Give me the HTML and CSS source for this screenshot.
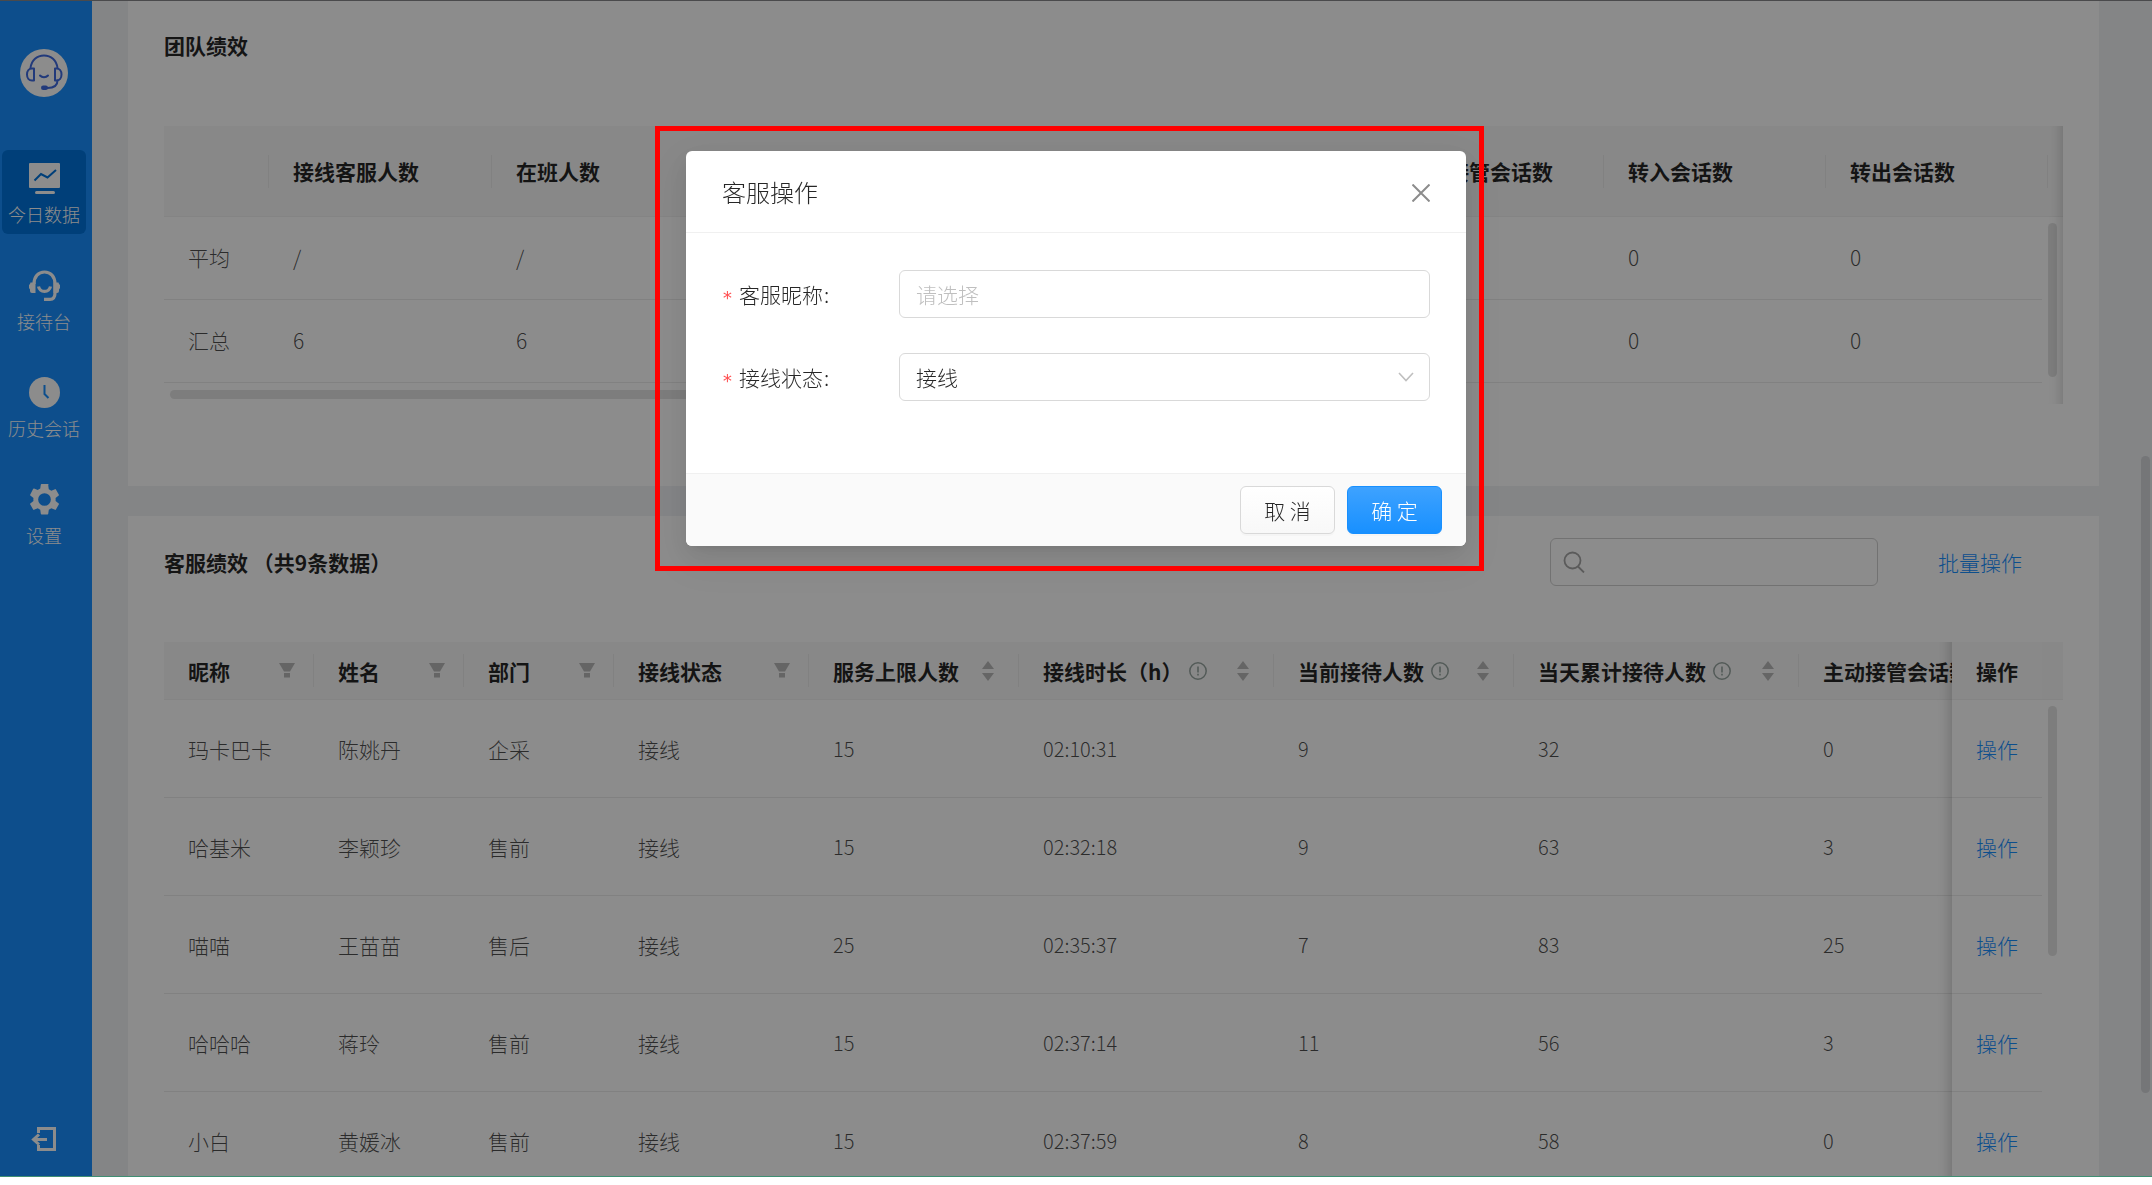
FILE: index.html
```html
<!DOCTYPE html>
<html lang="zh-CN">
<head>
<meta charset="utf-8">
<meta name="viewport" content="width=device-width, initial-scale=1">
<title>今日数据</title>
<link rel="stylesheet" href="styles.css">
</head>
<body>
<svg class="sprite" aria-hidden="true">
  <symbol id="i-filter" viewBox="0 0 16 15"><path d="M0 0h16l-5 8.500H5zM5 10h6v4.500H5z"/></symbol>
  <symbol id="i-sort" viewBox="0 0 12 20"><path d="M6 0l6 8H0zM6 20l6-8H0z"/></symbol>
  <symbol id="i-info" viewBox="0 0 18 18"><circle cx="9" cy="9" r="8.200" fill="none" stroke="currentColor" stroke-width="1.500"/><path d="M8.200 4.500h1.600v6H8.200zM8.200 11.800h1.600v1.700H8.200z"/></symbol>
</svg>
<div class="app">
  <nav class="sidebar">
    <svg class="avatar" viewBox="0 0 48 48" role="img" aria-label="客服">
      <circle cx="24" cy="24" r="24" fill="#fff"/>
      <g fill="none" stroke="#3f6ae0" stroke-width="2" stroke-linecap="round" stroke-linejoin="round">
        <path d="M10.500 19C11.500 11 17 6.500 24 6.500S36.500 11 37.500 19"/>
        <path d="M14 19.500v12h-2c-3 0-5-2.500-5-6s2-6 5-6zM35 19.500v12h1.500c3 0 5-2.500 5-6s-2-6-5-6z"/>
        <path d="M20 26.500c2 2.300 6 2.300 8 0"/>
        <path d="M37.500 31.500c0 4.500-3 7.500-10 7.500"/>
      </g>
      <rect x="21" y="36.500" width="7" height="4.500" rx="2.200" fill="#3f6ae0"/>
    </svg>
    <ul class="menu">
      <li><a class="menu-item active" href="#today">
        <svg viewBox="0 0 31 31"><path fill="currentColor" d="M1 0h29a1 1 0 0 1 1 1v23a1 1 0 0 1-1 1H1a1 1 0 0 1-1-1V1a1 1 0 0 1 1-1zM7.500 28h17a1.500 1.500 0 0 1 0 3h-17a1.500 1.500 0 0 1 0-3z"/><path d="M5.500 17.500l6.500-6.500 6.500 3.500L27 7" fill="none" stroke="#0073dc" stroke-width="2"/></svg>
        <span>今日数据</span></a></li>
      <li><a class="menu-item" href="#desk">
        <svg viewBox="0 0 31 31"><g fill="none" stroke="currentColor" stroke-width="3.200"><path d="M5 14C5 6.500 9.500 2 15.500 2S26 6.500 26 14v9c0 4-2 6.300-5 6.300h-6"/><path d="M9.500 16.500c1.500 6.500 10.500 6.500 12 0"/></g><path fill="currentColor" d="M1.500 12.500h5V23H3a2 2 0 0 1-2-2v-1.500L0 18v-3l1-1zM29.500 12.500h-5V23H28a2 2 0 0 0 2-2v-1.500l1-1.500v-3l-1-1z"/></svg>
        <span>接待台</span></a></li>
      <li><a class="menu-item" href="#history">
        <svg viewBox="0 0 31 31"><circle cx="15.500" cy="15.500" r="15.500" fill="currentColor"/><path d="M15.500 8v9l4 4" fill="none" stroke="#188fff" stroke-width="2"/></svg>
        <span>历史会话</span></a></li>
      <li><a class="menu-item" href="#settings">
        <svg viewBox="2 2 20 20"><path fill="currentColor" fill-rule="evenodd" d="M19.140 12.940c.04-.3.060-.61.060-.94s-.02-.64-.07-.94l2.030-1.580a.49.49 0 0 0 .12-.61l-1.920-3.320a.49.49 0 0 0-.59-.22l-2.390.96a7 7 0 0 0-1.620-.94l-.36-2.540A.48.48 0 0 0 13.920 2h-3.840a.48.48 0 0 0-.47.410l-.36 2.540a7.300 7.300 0 0 0-1.620.94l-2.390-.96a.48.48 0 0 0-.59.220L2.740 8.870a.48.48 0 0 0 .12.610l2.030 1.580a6 6 0 0 0 0 1.880l-2.030 1.580a.49.49 0 0 0-.12.610l1.920 3.320c.12.220.37.290.59.220l2.390-.96c.5.380 1.030.7 1.620.94l.36 2.540c.05.240.24.410.48.410h3.840c.24 0 .44-.17.470-.41l.36-2.540a7 7 0 0 0 1.620-.94l2.390.96c.22.080.47 0 .59-.22l1.920-3.320a.48.48 0 0 0-.12-.61zM12 16.100a4.100 4.100 0 1 1 0-8.200 4.100 4.100 0 0 1 0 8.200z"/></svg>
        <span>设置</span></a></li>
    </ul>
    <button class="logout" type="button" aria-label="退出">
      <svg viewBox="0 0 26 24" fill="none" stroke="currentColor" stroke-width="3"><path d="M7.500 6V1.500h16v21h-16V18M3 12.500h13"/><path d="M8 7.500l-5.500 5 5.500 5"/></svg>
    </button>
  </nav>

  <main class="content">
    <section class="card team">
      <h2>团队绩效</h2>
      <div class="table-box shade-end">
        <div class="scroller">
          <table class="team-table">
            <colgroup><col class="w105"><col class="w223" span="3"><col class="w222" span="6"></colgroup>
            <thead><tr><th></th><th>接线客服人数</th><th>在班人数</th><th></th><th></th><th></th><th>主动接管会话数</th><th>转入会话数</th><th>转出会话数</th><th></th></tr></thead>
            <tbody>
              <tr><td>平均</td><td>/</td><td>/</td><td></td><td></td><td></td><td></td><td>0</td><td>0</td><td></td></tr>
              <tr><td>汇总</td><td>6</td><td>6</td><td></td><td></td><td></td><td></td><td>0</td><td>0</td><td></td></tr>
            </tbody>
          </table>
          <div class="x-track"><div class="x-thumb"></div></div>
        </div>
        <div class="gutter"><div class="y-thumb"></div></div>
      </div>
    </section>

    <section class="card staff">
      <div class="toolbar">
        <h2>客服绩效 （共9条数据）</h2>
        <label class="search">
          <svg viewBox="0 0 22 22" fill="none" stroke="currentColor" stroke-width="1.800"><circle cx="9.500" cy="9.500" r="8"/><path d="M15 15.500l6 6"/></svg>
          <input type="text" aria-label="搜索">
        </label>
        <a class="batch" href="#batch">批量操作</a>
      </div>
      <div class="table-box">
        <div class="scroller">
          <table class="staff-table">
            <colgroup><col class="w150" span="3"><col class="w195"><col class="w210"><col class="w255"><col class="w240"><col class="w285"><col class="w270"><col class="w90"></colgroup>
            <thead><tr>
              <th><div class="head">昵称<svg class="filter"><use href="#i-filter"/></svg></div></th>
              <th><div class="head">姓名<svg class="filter"><use href="#i-filter"/></svg></div></th>
              <th><div class="head">部门<svg class="filter"><use href="#i-filter"/></svg></div></th>
              <th><div class="head">接线状态<svg class="filter"><use href="#i-filter"/></svg></div></th>
              <th><div class="head">服务上限人数<svg class="sort"><use href="#i-sort"/></svg></div></th>
              <th><div class="head">接线时长（h）<svg class="info"><use href="#i-info"/></svg><svg class="sort"><use href="#i-sort"/></svg></div></th>
              <th><div class="head">当前接待人数<svg class="info"><use href="#i-info"/></svg><svg class="sort"><use href="#i-sort"/></svg></div></th>
              <th><div class="head">当天累计接待人数<svg class="info"><use href="#i-info"/></svg><svg class="sort"><use href="#i-sort"/></svg></div></th>
              <th>主动接管会话数</th>
              <th class="fixed">操作</th>
            </tr></thead>
            <tbody>
              <tr><td>玛卡巴卡</td><td>陈姚丹</td><td>企采</td><td>接线</td><td class="num">15</td><td class="num">02:10:31</td><td class="num">9</td><td class="num">32</td><td class="num">0</td><td class="fixed"><a href="#op">操作</a></td></tr>
              <tr><td>哈基米</td><td>李颖珍</td><td>售前</td><td>接线</td><td class="num">15</td><td class="num">02:32:18</td><td class="num">9</td><td class="num">63</td><td class="num">3</td><td class="fixed"><a href="#op">操作</a></td></tr>
              <tr><td>喵喵</td><td>王苗苗</td><td>售后</td><td>接线</td><td class="num">25</td><td class="num">02:35:37</td><td class="num">7</td><td class="num">83</td><td class="num">25</td><td class="fixed"><a href="#op">操作</a></td></tr>
              <tr><td>哈哈哈</td><td>蒋玲</td><td>售前</td><td>接线</td><td class="num">15</td><td class="num">02:37:14</td><td class="num">11</td><td class="num">56</td><td class="num">3</td><td class="fixed"><a href="#op">操作</a></td></tr>
              <tr><td>小白</td><td>黄媛冰</td><td>售前</td><td>接线</td><td class="num">15</td><td class="num">02:37:59</td><td class="num">8</td><td class="num">58</td><td class="num">0</td><td class="fixed"><a href="#op">操作</a></td></tr>
            </tbody>
          </table>
        </div>
        <div class="gutter"><div class="y-thumb"></div></div>
      </div>
    </section>
    <div class="page-thumb"></div>
  </main>

  <div class="mask">
    <div class="modal" role="dialog" aria-labelledby="dialog-title">
      <header>
        <h1 id="dialog-title">客服操作</h1>
        <button class="close" type="button" aria-label="关闭"><svg viewBox="0 0 18 18" fill="none" stroke="currentColor" stroke-width="2"><path d="M0.500 0.500l17 17M17.500 0.500l-17 17"/></svg></button>
      </header>
      <form class="form">
        <div class="field">
          <label for="nick"><i>*</i>客服昵称<span>:</span></label>
          <input id="nick" type="text" placeholder="请选择">
        </div>
        <div class="field">
          <label for="state"><i>*</i>接线状态<span>:</span></label>
          <div class="select">
            <select id="state"><option>接线</option></select>
            <svg viewBox="0 0 16 10" fill="none" stroke="currentColor" stroke-width="1.600"><path d="M1 1l7 7.500L15 1"/></svg>
          </div>
        </div>
      </form>
      <footer>
        <button class="btn" type="button">取 消</button>
        <button class="btn primary" type="button">确 定</button>
      </footer>
      <div class="highlight"></div>
    </div>
  </div>
</div>
</body>
</html>
```
FILE: styles.css
```css
* { box-sizing: border-box; }

body {
  margin: 0;
  height: 100vh;
  padding-bottom: 8px;
  background: #fff;
  color: rgba(0, 0, 0, .85);
  font: 300 21px/32px "Noto Sans CJK SC", sans-serif;
  overflow: hidden;
}

h1, h2, ul { margin: 0; padding: 0; font-size: 21px; }
ul { list-style: none; }
a { color: #1890ff; text-decoration: none; }
button, input, select { font: inherit; color: inherit; }
.sprite { position: absolute; width: 0; height: 0; }

.app {
  position: relative;
  display: flex;
  height: 100%;
  border-top: 1px solid #4a4a4c;
  border-bottom: 1px solid #3f8f73;
  background: #f0f2f5;
  overflow: hidden;
}

/* Sidebar */
.sidebar {
  flex: none;
  display: flex;
  flex-direction: column;
  align-items: center;
  width: 92px;
  padding: 48px 6px 25px 2px;
  background: #188fff;
  color: #fff;
}
.avatar { width: 48px; height: 48px; margin-bottom: 53px; }
.menu { display: flex; flex-direction: column; gap: 23px; }
.menu-item {
  display: flex;
  flex-direction: column;
  align-items: center;
  gap: 7px;
  width: 84px;
  height: 84px;
  padding-top: 13px;
  border-radius: 6px;
  color: #fff;
  font-size: 18px;
  line-height: 27px;
}
.menu-item svg { width: 31px; height: 31px; }
.menu-item.active { background: #0073dc; }
.logout { margin-top: auto; padding: 0; border: 0; background: none; color: #fff; line-height: 0; }
.logout svg { width: 26px; height: 24px; }

/* Cards */
.content {
  position: relative;
  flex: 1;
  min-width: 0;
  display: flex;
  flex-direction: column;
  gap: 30px;
  padding: 0 53px 0 36px;
  overflow: hidden;
}
.card { flex: none; padding: 0 36px; background: #fff; }
.team { padding-top: 28px; padding-bottom: 82px; }
.team h2 { margin-bottom: 65px; }
.staff { padding-top: 22px; }
.toolbar { display: flex; align-items: center; margin-bottom: 56px; padding-right: 41px; }
.toolbar h2 { flex: 1; }
.search {
  display: flex;
  align-items: center;
  width: 328px;
  height: 48px;
  margin-right: 60px;
  padding: 0 12px;
  border: 1px solid #d0d0d0;
  border-radius: 6px;
  color: #a6a6a6;
}
.search svg { flex: none; width: 22px; height: 22px; }
.search input { flex: 1; min-width: 0; border: 0; background: none; outline: 0; }

/* Tables */
.table-box { position: relative; }
.scroller { overflow: hidden; }
table { width: 100%; table-layout: fixed; border-collapse: separate; border-spacing: 0; }
.team-table { min-width: 2106px; }
.staff-table { min-width: 1995px; }
.w90 { width: 90px; }
.w105 { width: 105px; }
.w150 { width: 150px; }
.w195 { width: 195px; }
.w210 { width: 210px; }
.w222 { width: 222px; }
.w223 { width: 223px; }
.w240 { width: 240px; }
.w255 { width: 255px; }
.w270 { width: 270px; }
.w285 { width: 285px; }
th {
  height: 58px;
  padding: 0 0 0 24px;
  border-bottom: 1px solid #f0f0f0;
  background: linear-gradient(#ececec, #ececec) right center / 1px 33px no-repeat #f8f8f8;
  text-align: left;
  font-weight: 700;
  white-space: nowrap;
}
td {
  height: 98px;
  padding: 0 0 0 24px;
  border-bottom: 1px solid #ebebeb;
  color: rgba(0, 0, 0, .7);
}
.num { font-size: 20px; }
.team-table th { height: 91px; }
.team-table td { height: 83px; padding-bottom: 2px; }
.head { display: flex; align-items: center; fill: #b8b8b8; }
.filter { width: 16px; height: 15px; margin: 0 19px 0 auto; }
.sort { width: 12px; height: 20px; margin: 0 25px 0 auto; }
.info { width: 18px; height: 18px; margin-left: 7px; color: #97a5a0; fill: #97a5a0; }

.fixed { position: sticky; right: 21px; background: #fff; }
th.fixed { background: #fafafa; }
.fixed::before {
  content: "";
  position: absolute;
  top: 0;
  bottom: -1px;
  left: -30px;
  width: 30px;
  box-shadow: inset -15px 0 12px -12px rgba(0, 0, 0, .18);
}
.shade-end::after {
  content: "";
  position: absolute;
  inset: 0 0 0 auto;
  width: 30px;
  box-shadow: inset -15px 0 12px -12px rgba(0, 0, 0, .15);
}
.x-track { height: 21px; padding: 7px 21px 0 6px; }
.x-thumb { width: 60%; height: 9px; border-radius: 5px; background: #e3e3e3; }
.gutter {
  position: absolute;
  inset: 58px 0 0 auto;
  width: 21px;
  padding: 6px 6px 0;
  background: #fff;
}
.team .gutter { top: 91px; }
.y-thumb { height: 250px; border-radius: 5px; background: #e3e3e3; }
.team .y-thumb { height: 154px; }
.page-thumb {
  position: absolute;
  top: 455px;
  right: 2px;
  width: 9px;
  height: 637px;
  border-radius: 5px;
  background: #d5d7da;
}

/* Dialog */
.mask {
  position: absolute;
  inset: 0;
  z-index: 10;
  padding-top: 150px;
  background: rgba(0, 0, 0, .45);
}
.modal {
  position: relative;
  width: 780px;
  max-width: 100%;
  margin: 0 auto;
  border-radius: 6px;
  background: #fff;
  box-shadow: 0 5px 9px -6px rgba(0, 0, 0, .12), 0 9px 24px rgba(0, 0, 0, .08), 0 14px 42px 12px rgba(0, 0, 0, .05);
}
.modal header {
  display: flex;
  align-items: center;
  justify-content: space-between;
  height: 82px;
  padding: 0 36px;
  border-bottom: 1px solid #f0f0f0;
}
.modal h1 { font-size: 24px; font-weight: 300; }
.close { padding: 3px 0 0; border: 0; background: none; color: #8c8c8c; line-height: 0; }
.close svg { width: 18px; height: 18px; }
.form { display: grid; gap: 35px; padding: 37px 36px 72px; }
.field { display: grid; grid-template-columns: 177px 1fr; align-items: center; }
.field label { display: flex; align-items: center; }
.field i {
  width: 17px;
  padding-top: 7px;
  color: #ff4d4f;
  font: normal 18px/20px "DejaVu Sans Mono", monospace;
}
.field span { margin-left: 1px; }
.field input, .field select {
  display: block;
  width: 100%;
  height: 48px;
  padding: 0 16px;
  border: 1px solid #d9d9d9;
  border-radius: 6px;
  background: #fff;
  outline: 0;
  appearance: none;
}
.field input::placeholder { color: #bfbfbf; opacity: 1; }
.select { position: relative; }
.select svg { position: absolute; top: 19px; right: 16px; width: 16px; height: 10px; color: #bfbfbf; }
.modal footer {
  display: flex;
  justify-content: flex-end;
  gap: 12px;
  padding: 12px 24px;
  border-top: 1px solid #f0f0f0;
  border-radius: 0 0 6px 6px;
  background: #fafafa;
}
.btn {
  width: 95px;
  height: 48px;
  padding: 0;
  border: 1px solid #d9d9d9;
  border-radius: 6px;
  background: linear-gradient(#fff, #f8f8f8);
  box-shadow: 0 2px 0 rgba(0, 0, 0, .02);
}
.btn.primary { border-color: #1890ff; background: linear-gradient(#3ea2ff, #1890ff); color: #fff; }
.highlight {
  position: absolute;
  inset: -25px -18px -25px -31px;
  border: 5px solid #f00;
  pointer-events: none;
}
```
